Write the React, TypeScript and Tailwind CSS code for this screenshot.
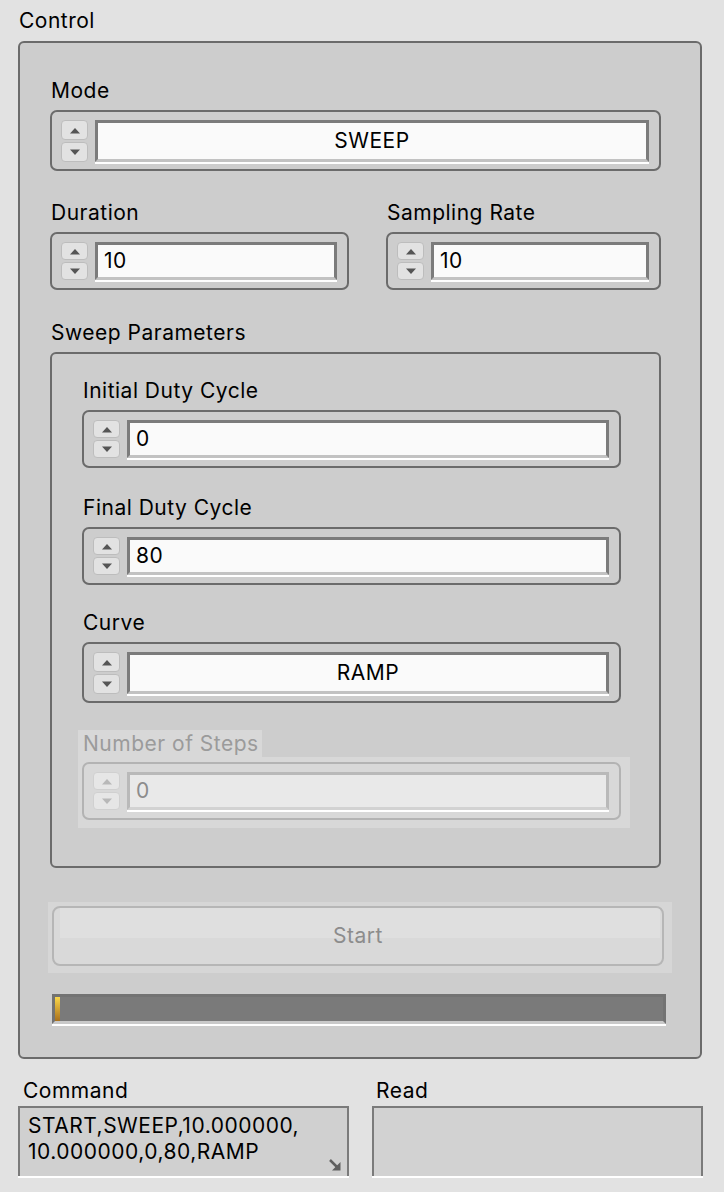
import React from 'react';

function Spinner({ disabled = false, tall = false }: { disabled?: boolean; tall?: boolean }) {
  const btn = disabled
    ? 'bg-[#e6e6e6] border-[#d0d0d0]'
    : 'bg-[#e2e2e2] border-[#bdbdbd]';
  const tri = disabled ? '#b8b8b8' : '#555555';
  const h = tall ? 'h-[20px]' : 'h-[18px]';
  return (
    <div className="flex flex-col gap-[2px] w-[27px] shrink-0">
      <div className={`${h} rounded-[4px] border flex items-center justify-center ${btn}`}>
        <svg width="12" height="7" viewBox="0 0 12 7">
          <path d="M1 6.5 L6 1 L11 6.5 Z" fill={tri} />
        </svg>
      </div>
      <div className={`${h} rounded-[4px] border flex items-center justify-center ${btn}`}>
        <svg width="12" height="7" viewBox="0 0 12 7">
          <path d="M1 0.5 L6 6 L11 0.5 Z" fill={tri} />
        </svg>
      </div>
    </div>
  );
}

function Field({
  value,
  center = false,
  tall = false,
  disabled = false,
}: {
  value: string;
  center?: boolean;
  tall?: boolean;
  disabled?: boolean;
}) {
  return (
    <div
      className={`flex-1 flex items-center border-[3px] shadow-[0_2px_0_#ffffff] px-[6px] ${
        tall ? 'h-[42px]' : 'h-[38px]'
      } ${center ? 'justify-center' : ''} ${
        disabled
          ? 'bg-[#e9e9e9] border-[#b9b9b9] border-b-[#d2d2d2] text-[#8c8c8c]'
          : 'bg-[#fafafa] border-[#7b7b7b] border-b-[#c2c2c2] text-black'
      }`}
    >
      {value}
    </div>
  );
}

function SpinBox({
  value,
  center = false,
  tall = false,
  disabled = false,
}: {
  value: string;
  center?: boolean;
  tall?: boolean;
  disabled?: boolean;
}) {
  return (
    <div
      className={`flex items-center gap-[7px] rounded-[7px] border-2 pl-[9px] pr-[10px] ${
        tall ? 'pt-[8px] pb-[7px]' : 'py-[8px]'
      } ${disabled ? 'border-[#b3b3b3]' : 'border-[#6b6b6b]'}`}
    >
      <Spinner disabled={disabled} tall={tall} />
      <Field value={value} center={center} tall={tall} disabled={disabled} />
    </div>
  );
}

function Label({ children, className = '' }: { children: React.ReactNode; className?: string }) {
  return <div className={`leading-[24px] pt-[1px] mb-[7px] ${className}`}>{children}</div>;
}

export default function App() {
  return (
    <div className="w-[724px] h-[1192px] bg-[#e2e2e2] text-black overflow-hidden font-['Inter',sans-serif] text-[21px] tracking-[0.5px]">
      <div className="pl-[19px] pt-[9px] leading-[24px]">Control</div>

      <div className="ml-[18px] mt-[8px] w-[684px] h-[1018px] border-2 border-[#6b6b6b] rounded-[6px] bg-[#cdcdcd] pl-[30px] pr-[39px] pt-[35px]">
        <Label className="pl-[1px]">Mode</Label>
        <SpinBox value="SWEEP" center tall />

        <div className="flex gap-[37px] mt-[29px]">
          <div className="w-[299px]">
            <Label className="pl-[1px]">Duration</Label>
            <SpinBox value="10" />
          </div>
          <div className="w-[275px]">
            <Label className="pl-[1px]">Sampling Rate</Label>
            <SpinBox value="10" />
          </div>
        </div>

        <Label className="mt-[30px] pl-[1px]">Sweep Parameters</Label>
        <div className="border-2 border-[#6b6b6b] rounded-[6px] pl-[30px] pr-[38px] pt-[24px] pb-[38px]">
          <Label className="pl-[1px]">Initial Duty Cycle</Label>
          <SpinBox value="0" />

          <Label className="mt-[27px] pl-[1px]">Final Duty Cycle</Label>
          <SpinBox value="80" />

          <Label className="mt-[25px] pl-[1px]">Curve</Label>
          <SpinBox value="RAMP" center tall />

          <div className="mt-[27px] -ml-[4px]">
            <div className="w-[184px] h-[27px] bg-[#d8d8d8] pl-[5px] leading-[27px] text-[#9b9b9b]">
              Number of Steps
            </div>
            <div className="w-[552px] bg-[#d8d8d8] pt-[5px] pl-[4px] pr-[9px] pb-[8px]">
              <SpinBox value="0" disabled />
            </div>
          </div>
        </div>

        <div className="mt-[34px] -ml-[2px] w-[624px] bg-[#d6d6d6] pt-[4px] pl-[4px] pr-[8px] pb-[7px]">
          <div className="relative h-[60px] rounded-[8px] border-2 border-[#b6b6b6] bg-[#d9d9d9] overflow-hidden">
            <div className="absolute left-[6px] right-[2px] top-0 h-[30px] bg-[#dfdfdf]" />
            <div className="relative h-full flex items-center justify-center text-[#8c8c8c]">
              Start
            </div>
          </div>
        </div>

        <div className="mt-[21px] ml-[2px] w-[614px] h-[30px] border-[3px] border-[#737373] border-b-[#c9c9c9] shadow-[0_2px_0_#ffffff] bg-[#7a7a7a] flex">
          <div className="w-[5px] h-full bg-gradient-to-b from-[#fcd84a] to-[#a8701c]" />
        </div>
      </div>

      <div className="flex mt-[19px]">
        <div className="ml-[18px] w-[331px]">
          <div className="pl-[5px] leading-[24px] pt-[1px] mb-[3px]">Command</div>
          <div className="relative h-[70px] border-2 border-b-0 border-[#7b7b7b] bg-[#d0d0d0] shadow-[0_2px_0_#ffffff] pl-[8px] pt-[5px] leading-[26px]">
            <div>START,SWEEP,10.000000,</div>
            <div>10.000000,0,80,RAMP</div>
            <svg className="absolute right-[5px] bottom-[4px]" width="14" height="14" viewBox="0 0 14 14">
              <path d="M2 2 L9 9" stroke="#5f5f5f" strokeWidth="2.5" />
              <path d="M4 12.5 L12.5 12.5 L12.5 4 Z" fill="#5f5f5f" />
            </svg>
          </div>
        </div>
        <div className="ml-[23px] w-[331px]">
          <div className="pl-[4px] leading-[24px] pt-[1px] mb-[3px]">Read</div>
          <div className="h-[70px] border-2 border-b-0 border-[#7b7b7b] bg-[#d2d2d2] shadow-[0_2px_0_#ffffff]" />
        </div>
      </div>
    </div>
  );
}
